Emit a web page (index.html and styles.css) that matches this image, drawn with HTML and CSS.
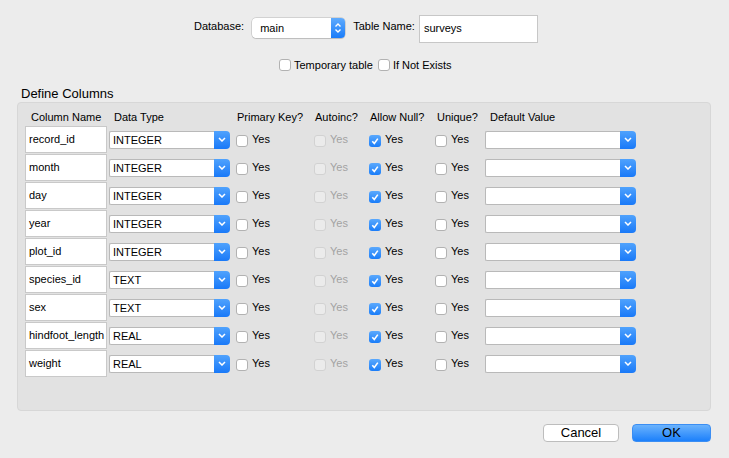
FILE: index.html
```html
<!DOCTYPE html>
<html>
<head>
<meta charset="utf-8">
<link rel="stylesheet" href="styles.css">
</head>
<body>
<div class="top">
  <span class="lbl db-lbl">Database:</span>
  <div class="popup">
    <span class="val">main</span>
    <span class="stepper"><svg width="8" height="12" viewBox="0 0 8 12"><polyline points="1.5,4.5 4,2 6.5,4.5" fill="none" stroke="#fff" stroke-width="1.4"/><polyline points="1.5,7.5 4,10 6.5,7.5" fill="none" stroke="#fff" stroke-width="1.4"/></svg></span>
  </div>
  <span class="lbl tn-lbl">Table Name:</span>
  <div class="textfield">surveys</div>
</div>
<div class="opts">
  <label class="opt"><span class="cb"></span>Temporary table</label>
  <label class="opt opt2"><span class="cb"></span>If Not Exists</label>
</div>
<div class="section-title">Define Columns</div>
<div class="panel">
  <div class="grid head">
    <div class="h h-name">Column Name</div>
    <div class="h h-type">Data Type</div>
    <div class="h h-pk">Primary Key?</div>
    <div class="h h-ai">Autoinc?</div>
    <div class="h h-nl">Allow Null?</div>
    <div class="h h-uq">Unique?</div>
    <div class="h h-dv">Default Value</div>
  </div>
  <div class="grid rows">
    <div class="name">record_id</div><div class="select"><span class="sv">INTEGER</span><span class="sb"><svg width="8" height="5" viewBox="0 0 8 5"><polyline points="1,1 4,4 7,1" fill="none" stroke="#fff" stroke-width="1.5"/></svg></span></div><div class="chk"><span class="cb"></span>Yes</div><div class="chk dis"><span class="cb"></span>Yes</div><div class="chk"><span class="cb on"><svg width="10" height="10" viewBox="0 0 10 10"><polyline points="2.3,5.3 4.3,7.5 7.8,2.6" fill="none" stroke="#fff" stroke-width="1.6"/></svg></span>Yes</div><div class="chk"><span class="cb"></span>Yes</div><div class="select dsel"><span class="sv"></span><span class="sb"><svg width="8" height="5" viewBox="0 0 8 5"><polyline points="1,1 4,4 7,1" fill="none" stroke="#fff" stroke-width="1.5"/></svg></span></div>

    <div class="name">month</div><div class="select"><span class="sv">INTEGER</span><span class="sb"><svg width="8" height="5" viewBox="0 0 8 5"><polyline points="1,1 4,4 7,1" fill="none" stroke="#fff" stroke-width="1.5"/></svg></span></div><div class="chk"><span class="cb"></span>Yes</div><div class="chk dis"><span class="cb"></span>Yes</div><div class="chk"><span class="cb on"><svg width="10" height="10" viewBox="0 0 10 10"><polyline points="2.3,5.3 4.3,7.5 7.8,2.6" fill="none" stroke="#fff" stroke-width="1.6"/></svg></span>Yes</div><div class="chk"><span class="cb"></span>Yes</div><div class="select dsel"><span class="sv"></span><span class="sb"><svg width="8" height="5" viewBox="0 0 8 5"><polyline points="1,1 4,4 7,1" fill="none" stroke="#fff" stroke-width="1.5"/></svg></span></div>

    <div class="name">day</div><div class="select"><span class="sv">INTEGER</span><span class="sb"><svg width="8" height="5" viewBox="0 0 8 5"><polyline points="1,1 4,4 7,1" fill="none" stroke="#fff" stroke-width="1.5"/></svg></span></div><div class="chk"><span class="cb"></span>Yes</div><div class="chk dis"><span class="cb"></span>Yes</div><div class="chk"><span class="cb on"><svg width="10" height="10" viewBox="0 0 10 10"><polyline points="2.3,5.3 4.3,7.5 7.8,2.6" fill="none" stroke="#fff" stroke-width="1.6"/></svg></span>Yes</div><div class="chk"><span class="cb"></span>Yes</div><div class="select dsel"><span class="sv"></span><span class="sb"><svg width="8" height="5" viewBox="0 0 8 5"><polyline points="1,1 4,4 7,1" fill="none" stroke="#fff" stroke-width="1.5"/></svg></span></div>

    <div class="name">year</div><div class="select"><span class="sv">INTEGER</span><span class="sb"><svg width="8" height="5" viewBox="0 0 8 5"><polyline points="1,1 4,4 7,1" fill="none" stroke="#fff" stroke-width="1.5"/></svg></span></div><div class="chk"><span class="cb"></span>Yes</div><div class="chk dis"><span class="cb"></span>Yes</div><div class="chk"><span class="cb on"><svg width="10" height="10" viewBox="0 0 10 10"><polyline points="2.3,5.3 4.3,7.5 7.8,2.6" fill="none" stroke="#fff" stroke-width="1.6"/></svg></span>Yes</div><div class="chk"><span class="cb"></span>Yes</div><div class="select dsel"><span class="sv"></span><span class="sb"><svg width="8" height="5" viewBox="0 0 8 5"><polyline points="1,1 4,4 7,1" fill="none" stroke="#fff" stroke-width="1.5"/></svg></span></div>

    <div class="name">plot_id</div><div class="select"><span class="sv">INTEGER</span><span class="sb"><svg width="8" height="5" viewBox="0 0 8 5"><polyline points="1,1 4,4 7,1" fill="none" stroke="#fff" stroke-width="1.5"/></svg></span></div><div class="chk"><span class="cb"></span>Yes</div><div class="chk dis"><span class="cb"></span>Yes</div><div class="chk"><span class="cb on"><svg width="10" height="10" viewBox="0 0 10 10"><polyline points="2.3,5.3 4.3,7.5 7.8,2.6" fill="none" stroke="#fff" stroke-width="1.6"/></svg></span>Yes</div><div class="chk"><span class="cb"></span>Yes</div><div class="select dsel"><span class="sv"></span><span class="sb"><svg width="8" height="5" viewBox="0 0 8 5"><polyline points="1,1 4,4 7,1" fill="none" stroke="#fff" stroke-width="1.5"/></svg></span></div>

    <div class="name">species_id</div><div class="select"><span class="sv">TEXT</span><span class="sb"><svg width="8" height="5" viewBox="0 0 8 5"><polyline points="1,1 4,4 7,1" fill="none" stroke="#fff" stroke-width="1.5"/></svg></span></div><div class="chk"><span class="cb"></span>Yes</div><div class="chk dis"><span class="cb"></span>Yes</div><div class="chk"><span class="cb on"><svg width="10" height="10" viewBox="0 0 10 10"><polyline points="2.3,5.3 4.3,7.5 7.8,2.6" fill="none" stroke="#fff" stroke-width="1.6"/></svg></span>Yes</div><div class="chk"><span class="cb"></span>Yes</div><div class="select dsel"><span class="sv"></span><span class="sb"><svg width="8" height="5" viewBox="0 0 8 5"><polyline points="1,1 4,4 7,1" fill="none" stroke="#fff" stroke-width="1.5"/></svg></span></div>

    <div class="name">sex</div><div class="select"><span class="sv">TEXT</span><span class="sb"><svg width="8" height="5" viewBox="0 0 8 5"><polyline points="1,1 4,4 7,1" fill="none" stroke="#fff" stroke-width="1.5"/></svg></span></div><div class="chk"><span class="cb"></span>Yes</div><div class="chk dis"><span class="cb"></span>Yes</div><div class="chk"><span class="cb on"><svg width="10" height="10" viewBox="0 0 10 10"><polyline points="2.3,5.3 4.3,7.5 7.8,2.6" fill="none" stroke="#fff" stroke-width="1.6"/></svg></span>Yes</div><div class="chk"><span class="cb"></span>Yes</div><div class="select dsel"><span class="sv"></span><span class="sb"><svg width="8" height="5" viewBox="0 0 8 5"><polyline points="1,1 4,4 7,1" fill="none" stroke="#fff" stroke-width="1.5"/></svg></span></div>

    <div class="name">hindfoot_length</div><div class="select"><span class="sv">REAL</span><span class="sb"><svg width="8" height="5" viewBox="0 0 8 5"><polyline points="1,1 4,4 7,1" fill="none" stroke="#fff" stroke-width="1.5"/></svg></span></div><div class="chk"><span class="cb"></span>Yes</div><div class="chk dis"><span class="cb"></span>Yes</div><div class="chk"><span class="cb on"><svg width="10" height="10" viewBox="0 0 10 10"><polyline points="2.3,5.3 4.3,7.5 7.8,2.6" fill="none" stroke="#fff" stroke-width="1.6"/></svg></span>Yes</div><div class="chk"><span class="cb"></span>Yes</div><div class="select dsel"><span class="sv"></span><span class="sb"><svg width="8" height="5" viewBox="0 0 8 5"><polyline points="1,1 4,4 7,1" fill="none" stroke="#fff" stroke-width="1.5"/></svg></span></div>

    <div class="name">weight</div><div class="select"><span class="sv">REAL</span><span class="sb"><svg width="8" height="5" viewBox="0 0 8 5"><polyline points="1,1 4,4 7,1" fill="none" stroke="#fff" stroke-width="1.5"/></svg></span></div><div class="chk"><span class="cb"></span>Yes</div><div class="chk dis"><span class="cb"></span>Yes</div><div class="chk"><span class="cb on"><svg width="10" height="10" viewBox="0 0 10 10"><polyline points="2.3,5.3 4.3,7.5 7.8,2.6" fill="none" stroke="#fff" stroke-width="1.6"/></svg></span>Yes</div><div class="chk"><span class="cb"></span>Yes</div><div class="select dsel"><span class="sv"></span><span class="sb"><svg width="8" height="5" viewBox="0 0 8 5"><polyline points="1,1 4,4 7,1" fill="none" stroke="#fff" stroke-width="1.5"/></svg></span></div>
  </div>
</div>
<div class="buttons">
  <button class="btn cancel">Cancel</button>
  <button class="btn ok">OK</button>
</div>
</body>
</html>
```
FILE: styles.css
```css
html, body {
  margin: 0;
  padding: 0;
}
body {
  background: #ececec;
  font-family: "Liberation Sans", Arial, sans-serif;
  font-size: 11px;
  color: #000;
  width: 729px;
  height: 458px;
  overflow: hidden;
}

/* top row */
.top {
  display: flex;
  align-items: flex-start;
  padding: 15px 0 0 194px;
  height: 28px;
}
.lbl {
  margin-top: 5px;
  line-height: 13px;
}
.db-lbl { margin-right: 8px; }
.tn-lbl { margin-left: 8px; margin-right: 4px; }
.popup {
  margin-top: 3px;
  width: 93px;
  height: 20px;
  display: flex;
  background: #fff;
  border-radius: 4px;
  box-shadow: 0 0 0 0.5px rgba(0,0,0,0.22), 0 1px 1px rgba(0,0,0,0.1);
}
.popup .val {
  flex: 1;
  padding-left: 8px;
  line-height: 20px;
}
.stepper {
  width: 14px;
  border-radius: 0 4px 4px 0;
  background: linear-gradient(#5fabfd, #1a7cf9);
  display: flex;
  align-items: center;
  justify-content: center;
}
.textfield {
  width: 119px;
  height: 28px;
  box-sizing: border-box;
  border: 1px solid #c7c7c7;
  background: #fff;
  padding-left: 4px;
  line-height: 24px;
}

/* options */
.opts {
  display: flex;
  align-items: center;
  padding-left: 279px;
  margin-top: 16px;
  height: 12px;
}
.opt {
  display: flex;
  align-items: center;
  line-height: 13px;
}
.opt .cb { margin-right: 3px; }
.opt2 { margin-left: 5px; }

.cb {
  width: 12px;
  height: 12px;
  box-sizing: border-box;
  border: 1px solid #b2b2b2;
  border-radius: 3px;
  background: #fff;
  display: flex;
  align-items: center;
  justify-content: center;
  flex: none;
}
.cb.on {
  border: none;
  background: linear-gradient(#5ba9fd, #1a7df9);
}

.section-title {
  font-size: 13px;
  line-height: 15px;
  padding-left: 21px;
  margin-top: 15px;
}

/* panel */
.panel {
  margin: 1px 0 0 17px;
  width: 694px;
  height: 309px;
  box-sizing: border-box;
  border: 1px solid #d7d7d7;
  border-radius: 4px;
  background: #e2e2e2;
  padding: 8px 0 0 7px;
}
.grid {
  display: grid;
  grid-template-columns: 84px 127px 78px 55px 66px 50px 151px;
}
.head {
  height: 13px;
  margin-bottom: 2px;
}
.h { line-height: 13px; white-space: nowrap; }
.h-name { padding-left: 6px; }
.h-type { padding-left: 5px; }
.h-pk { padding-left: 1px; }
.h-ai { padding-left: 1px; }
.h-nl { padding-left: 1px; }
.h-uq { padding-left: 2px; }
.h-dv { padding-left: 5px; }

.rows {
  grid-auto-rows: 27px;
  row-gap: 1px;
}
.name {
  width: 82px;
  height: 27px;
  box-sizing: border-box;
  border: 1px solid #c9c9c9;
  background: #fff;
  padding-left: 3px;
  line-height: 25px;
  white-space: nowrap;
  overflow: hidden;
}
.select {
  align-self: center;
  width: 121px;
  height: 18px;
  display: flex;
  border-radius: 3px;
}
.select .sv {
  flex: 1;
  box-sizing: border-box;
  background: #fff;
  border: 1px solid #b9b9b9;
  border-right: none;
  border-radius: 2px 0 0 2px;
  padding-left: 3px;
  line-height: 16px;
}
.select .sb {
  width: 16px;
  border-radius: 0 4px 4px 0;
  background: linear-gradient(#4fa2fd, #1979f8);
  display: flex;
  align-items: center;
  justify-content: center;
}
.dsel { width: 151px; }

.chk {
  display: flex;
  align-items: center;
  line-height: 13px;
}
.chk .cb {
  margin-top: 2px;
  margin-right: 4px;
}
.chk.dis { color: #a2a2a2; }
.chk.dis .cb {
  background: #ebebeb;
  border-color: #d2d2d2;
}

/* buttons */
.buttons {
  display: flex;
  justify-content: flex-end;
  gap: 13px;
  padding-right: 18px;
  margin-top: 13px;
}
.btn {
  font-family: "Liberation Sans", Arial, sans-serif;
  font-size: 13px;
  height: 18px;
  padding: 0;
  line-height: 16px;
  box-sizing: border-box;
  border-radius: 4px;
  color: #000;
}
.cancel {
  width: 76px;
  background: #fff;
  border: 1px solid #bdbdbd;
}
.ok {
  width: 79px;
  background: linear-gradient(#6bb3fd, #1c80fb);
  border: 1px solid #3b8ef3;
}
```
